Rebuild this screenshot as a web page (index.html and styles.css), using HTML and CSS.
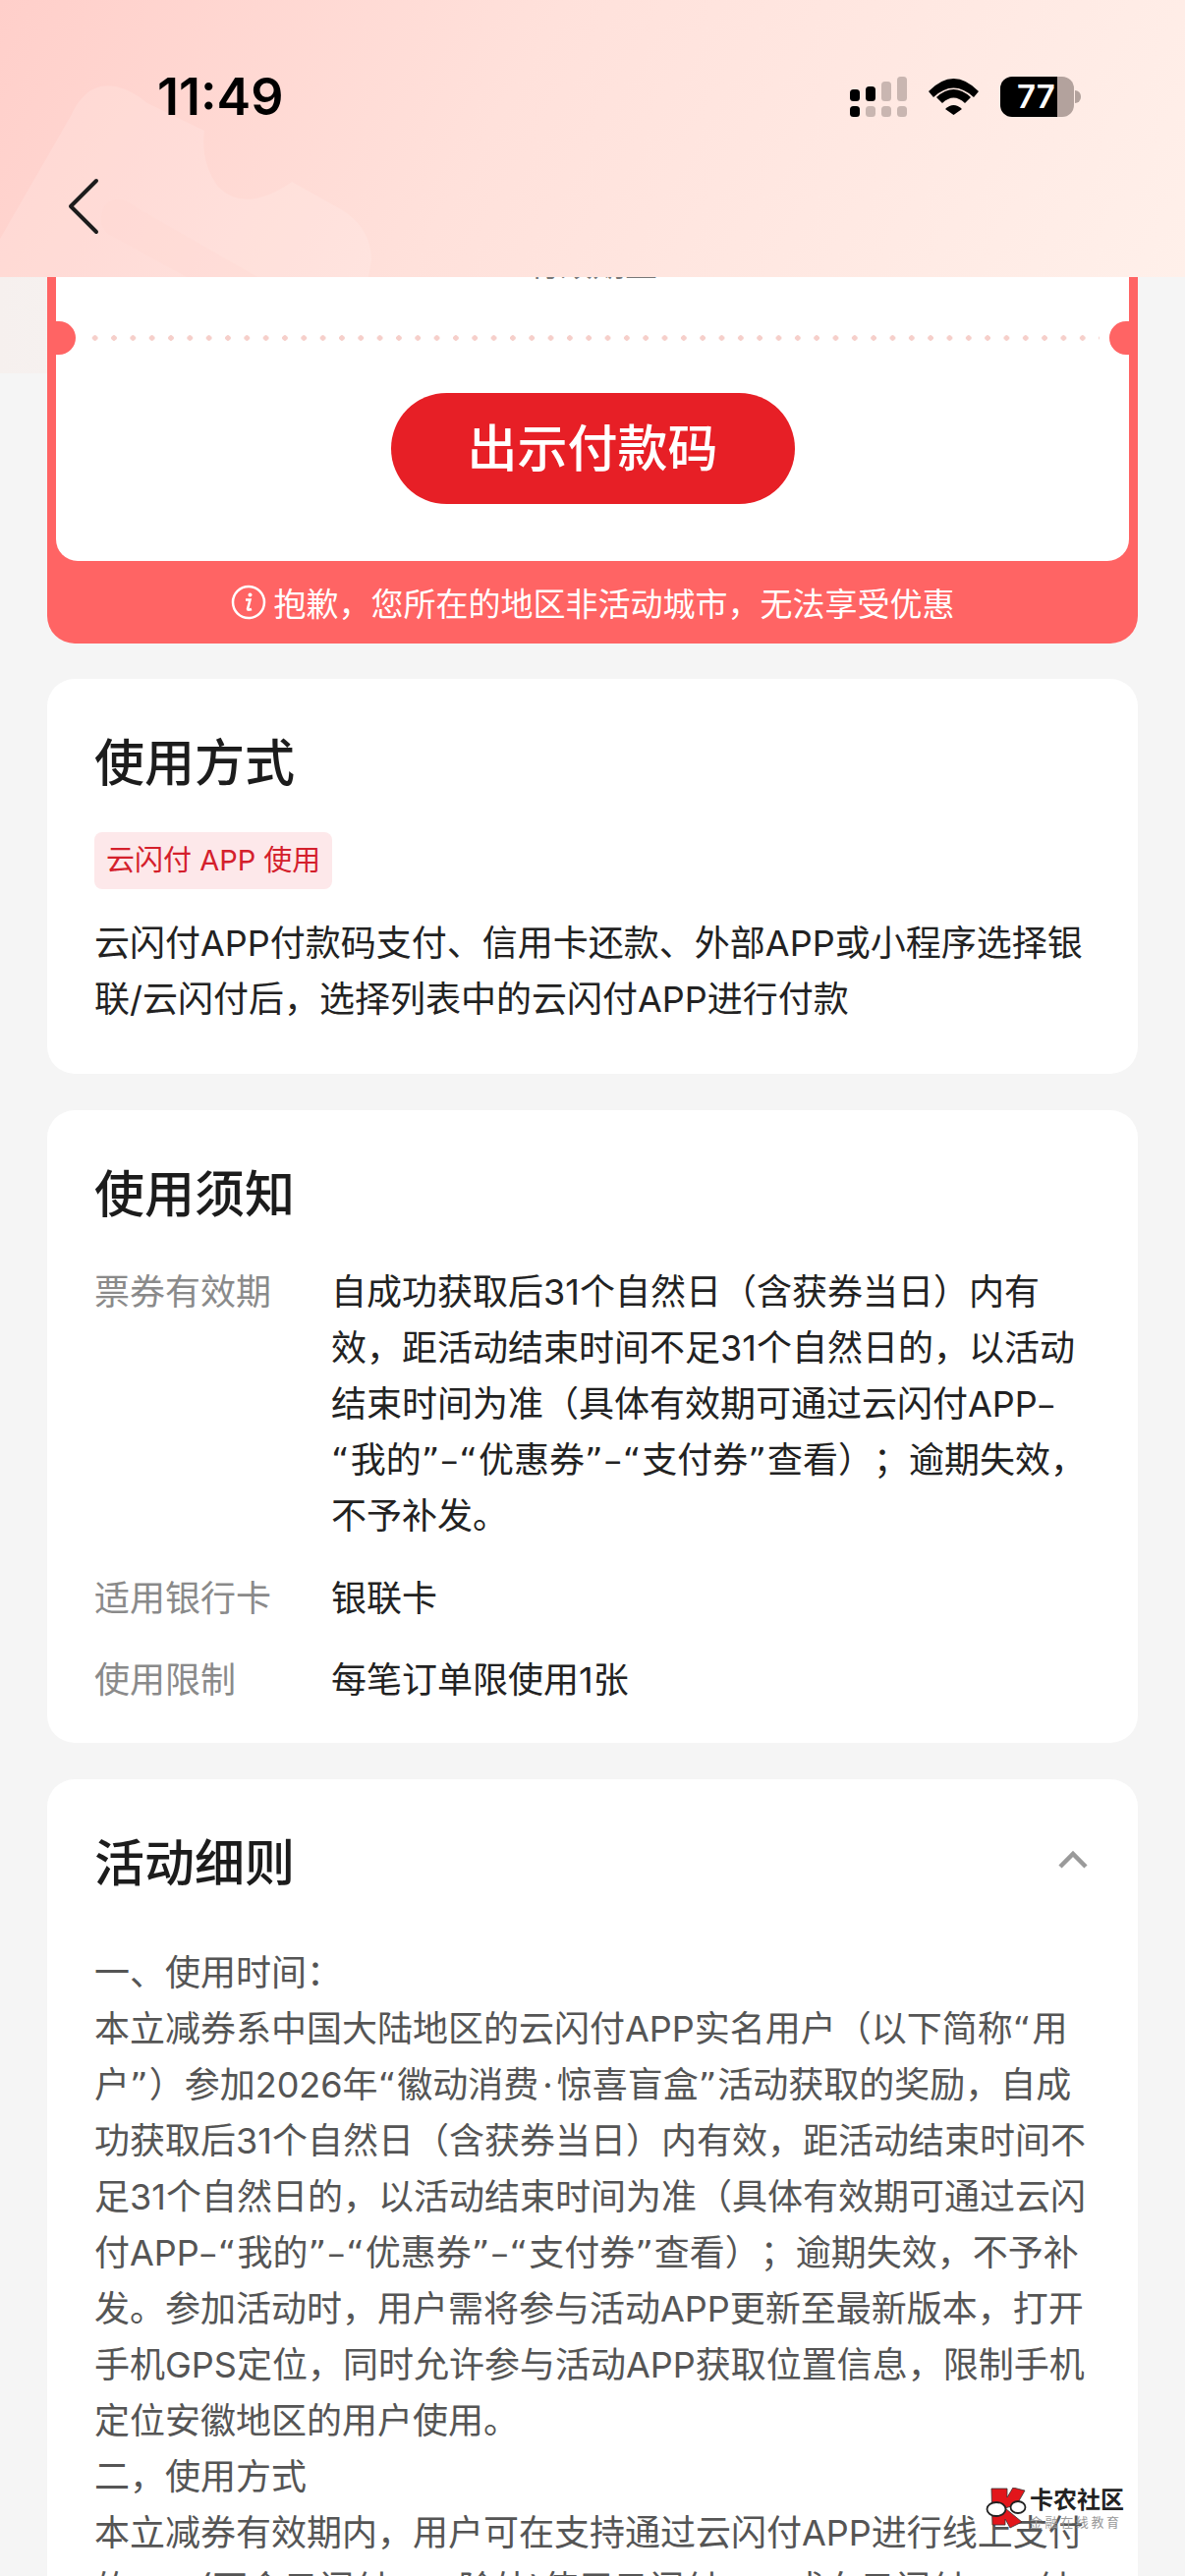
FILE: index.html
```html
<!DOCTYPE html>
<html lang="zh-CN">
<head>
  <meta charset="UTF-8">
  <title>优惠券详情</title>
  <link rel="stylesheet" href="styles.css">
</head>
<body>
  <div id="page">
    <div id="header">
      <svg class="headerArt" width="420" height="282" viewBox="0 0 420 282">
        <path d="M0 243 L72 118 Q88 82 118 88 Q135 92 150 105 L208 133 Q204 165 222 190 Q250 218 297 185 L347 213 Q378 232 378 265 L375 282 H0 Z" fill="#fff" fill-opacity="0.14"/>
        <path d="M103 222 Q105 202 122 203 Q130 204 140 212 L262 282 H190 L110 238 Q103 232 103 222 Z" fill="#ffd6d0" fill-opacity="0.3"/>
      </svg>
      <div class="statusBar">
        <div class="time">11:49</div>
        <div class="statusIcons">
          <svg width="58" height="41" viewBox="0 0 58 41">
            <rect x="0" y="13" width="10" height="12" rx="3.500" fill="#000"/>
            <rect x="16" y="10" width="10" height="15" rx="3.500" fill="#000"/>
            <rect x="32" y="5" width="10" height="20" rx="3.500" fill="#c9b6b1"/>
            <rect x="48" y="0" width="10" height="25" rx="3.500" fill="#c9b6b1"/>
            <rect x="0" y="30" width="10" height="11" rx="3.500" fill="#000"/>
            <rect x="16" y="30" width="10" height="11" rx="3.500" fill="#c9b6b1"/>
            <rect x="32" y="30" width="10" height="11" rx="3.500" fill="#c9b6b1"/>
            <rect x="48" y="30" width="10" height="11" rx="3.500" fill="#c9b6b1"/>
          </svg>
          <svg width="51" height="37" viewBox="0 0 51 37">
            <path d="M0 13 Q25.500 -13 51 13 L46 19 Q25.500 0 5 19 Z" fill="#000"/>
            <path d="M8 19 Q25.500 3 43 19 L37 25 Q25.500 14 14 25 Z" fill="#000"/>
            <path d="M17 31 Q25.500 23 34 31 L25.500 37 Z" fill="#000"/>
          </svg>
          <div class="battery">
            <div class="batteryBody"><span>77</span></div>
            <div class="batteryTip"></div>
          </div>
        </div>
      </div>
      <div class="navBar">
        <svg width="34" height="58" viewBox="0 0 34 58">
          <path d="M30 3 L4 29 L30 55" fill="none" stroke="#1c1c1c" stroke-width="4" stroke-linecap="round" stroke-linejoin="round"/>
        </svg>
      </div>
    </div>

    <div id="main">
      <div class="ticket">
        <div class="ticketInner">
          <div class="cutText">有效期至</div>
          <div class="tear">
            <div class="notch notchLeft"></div>
            <div class="dots"></div>
            <div class="notch notchRight"></div>
          </div>
          <div class="payRow">
            <div class="payButton">出示付款码</div>
          </div>
        </div>
        <div class="notice">
          <svg width="36" height="36" viewBox="0 0 36 36">
            <circle cx="18" cy="18" r="16" fill="none" stroke="#fff" stroke-width="2.500"/>
            <circle cx="19.500" cy="10.500" r="2" fill="#fff"/>
            <path d="M15 15.500 H19.500 L17 25 Q17 26.500 21 25" fill="none" stroke="#fff" stroke-width="2.500"/>
          </svg>
          <span>抱歉，您所在的地区非活动城市，无法享受优惠</span>
        </div>
      </div>

      <div class="card usage">
        <h2>使用方式</h2>
        <div class="tag">云闪付 APP 使用</div>
        <p>云闪付APP付款码支付、信用卡还款、外部APP或小程序选择银联/云闪付后，选择列表中的云闪付APP进行付款</p>
      </div>

      <div class="card notes">
        <h2>使用须知</h2>
        <div class="noteRow">
          <div class="noteLabel">票券有效期</div>
          <div class="noteValue">自成功获取后31个自然日（含获券当日）内有效，距活动结束时间不足31个自然日的，以活动结束时间为准（具体有效期可通过云闪付APP<span class="quo">–“</span>我的<span class="quo">”–“</span>优惠券<span class="quo">”–“</span>支付券<span class="quo">”</span>查看）；逾期失效，不予补发。</div>
        </div>
        <div class="noteRow">
          <div class="noteLabel">适用银行卡</div>
          <div class="noteValue">银联卡</div>
        </div>
        <div class="noteRow">
          <div class="noteLabel">使用限制</div>
          <div class="noteValue">每笔订单限使用1张</div>
        </div>
      </div>

      <div class="card rules">
        <div class="rulesHead">
          <h2>活动细则</h2>
          <svg class="collapseIcon" width="34" height="20" viewBox="0 0 34 20">
            <path d="M4 17 L17 4 L30 17" fill="none" stroke="#9a9a9a" stroke-width="4.500"/>
          </svg>
        </div>
        <div class="rulesText">
          <p>一、使用时间：</p>
          <p>本立减券系中国大陆地区的云闪付APP实名用户（以下简称<span class="quo">“</span>用户<span class="quo">”</span>）参加2026年<span class="quo">“</span>徽动消费<span class="midDot">·</span>惊喜盲盒<span class="quo">”</span>活动获取的奖励，自成功获取后31个自然日（含获券当日）内有效，距活动结束时间不足31个自然日的，以活动结束时间为准（具体有效期可通过云闪付APP<span class="quo">–“</span>我的<span class="quo">”–“</span>优惠券<span class="quo">”–“</span>支付券<span class="quo">”</span>查看）；逾期失效，不予补发。参加活动时，用户需将参与活动APP更新至最新版本，打开手机GPS定位，同时允许参与活动APP获取位置信息，限制手机定位安徽地区的用户使用。</p>
          <p>二，使用方式</p>
          <p>本立减券有效期内，用户可在支持通过云闪付APP进行线上支付的APP(不含云闪付APP除外)使用云闪付APP或向云闪付APP付</p>
        </div>
      </div>
    </div>

    <div class="watermark">
      <svg width="42" height="42" viewBox="0 0 42 42">
        <path d="M6 1 H22 V10 L28 0 L40 3 L32 17 L20 21 L37 35 L25 41 L20 32 V38 H7 Z" fill="#e2161b" stroke="#333" stroke-width="0.800"/>
        <ellipse cx="11" cy="22" rx="9.500" ry="7" fill="#fff" stroke="#222" stroke-width="1.800"/>
        <ellipse cx="33" cy="20" rx="7.500" ry="6" fill="#fff" stroke="#222" stroke-width="1.800"/>
      </svg>
      <div class="watermarkText">
        <div class="wmTitle">卡农社区</div>
        <div class="wmSub">金融在线教育</div>
      </div>
    </div>
  </div>
</body>
</html>
```

FILE: styles.css
```css
* {
  box-sizing: border-box;
}

html,
body {
  margin: 0;
  padding: 0;
}

body {
  background: #f5f5f5;
  font-family: Inter, "Noto Sans CJK SC", sans-serif;
  color: #222;
  text-spacing-trim: space-all;
}

#page {
  position: relative;
  width: 1206px;
  height: 2622px;
  overflow: hidden;
  background: linear-gradient(90deg, #f6f0ee 0, #f5f5f5 300px) no-repeat;
  background-size: 100% 380px;
}

#header {
  position: relative;
  z-index: 2;
  height: 282px;
  background: linear-gradient(120deg, #ffcfca 0%, #ffe1db 42%, #fff0ea 100%);
  overflow: hidden;
}

.headerArt {
  position: absolute;
  left: 0;
  top: 0;
}

.statusBar {
  position: relative;
  display: flex;
  justify-content: space-between;
  align-items: center;
  height: 140px;
  padding: 56px 106px 0 160px;
}

.time {
  font-size: 52px;
  font-weight: 600;
  color: #000;
}

.statusIcons {
  display: flex;
  align-items: center;
  gap: 22px;
}

.battery {
  display: flex;
  align-items: center;
  gap: 1px;
}

.batteryBody {
  width: 75px;
  height: 41px;
  border-radius: 12px;
  background: linear-gradient(90deg, #000 0, #000 77%, #b3a29d 77%, #b3a29d 100%);
  color: #fff;
  font-size: 33px;
  font-weight: 600;
  line-height: 41px;
  padding-left: 17px;
}

.batteryTip {
  width: 6px;
  height: 13px;
  border-radius: 0 6px 6px 0;
  background: #b3a29d;
}

.navBar {
  position: relative;
  padding: 41px 0 0 68px;
}

#main {
  display: flex;
  flex-direction: column;
  gap: 37px;
  padding: 0 48px;
}

.ticket {
  margin-top: -33px;
  margin-bottom: -1px;
  background: #ff6464;
  border-radius: 0 0 28px 28px;
  padding: 0 9px;
}

.ticketInner {
  background: #fff;
  border-radius: 0 0 22px 22px;
  padding-bottom: 58px;
}

.cutText {
  height: 48px;
  line-height: 40px;
  overflow: hidden;
  text-align: center;
  font-size: 33px;
  color: #777;
}

.tear {
  display: flex;
  align-items: center;
  justify-content: space-between;
  height: 34px;
  margin-top: 30px;
}

.notch {
  width: 20px;
  height: 34px;
  background: #ff6464;
}

.notchLeft {
  border-radius: 0 17px 17px 0;
}

.notchRight {
  border-radius: 17px 0 0 17px;
}

.dots {
  flex: 1;
  height: 6px;
  margin: 0 10px;
  background-image: radial-gradient(circle, #f6cfca 2.500px, transparent 3px);
  background-size: 19.330px 6px;
}

.payRow {
  display: flex;
  justify-content: center;
  margin-top: 39px;
}

.payButton {
  width: 411px;
  height: 113px;
  line-height: 113px;
  border-radius: 57px;
  background: #e71f26;
  color: #fff;
  text-align: center;
  font-size: 51px;
  font-weight: 500;
}

.notice {
  display: flex;
  align-items: center;
  justify-content: center;
  gap: 8px;
  height: 84px;
  color: #fff;
  font-size: 33px;
}

.card {
  background: #fff;
  border-radius: 28px;
  padding: 48px;
}

.card h2 {
  margin: 0;
  font-size: 51px;
  font-weight: 500;
  line-height: 76px;
  color: #1c1c1c;
}

.card p {
  margin: 0;
}

.usage {
  height: 402px;
}

.tag {
  display: inline-block;
  margin-top: 32px;
  height: 58px;
  line-height: 58px;
  padding: 0 12px;
  border-radius: 8px;
  background: #fde8ea;
  color: #d4202c;
  font-size: 29px;
}

.usage p {
  margin-top: 27px;
  font-size: 36px;
  line-height: 57px;
  color: #222;
}

.notes {
  height: 644px;
}

.noteRow {
  display: flex;
  margin-top: 26.500px;
  font-size: 36px;
  line-height: 57px;
}

.notes h2 + .noteRow {
  margin-top: 33px;
}

.noteLabel {
  width: 241px;
  flex: none;
  color: #8a8a8a;
}

.noteValue {
  flex: 1;
  margin-right: -4px;
  color: #222;
}

.quo {
  font-family: "DejaVu Sans", sans-serif;
  letter-spacing: 1px;
}

.midDot {
  padding: 0 4px;
}

.rules {
  padding-bottom: 0;
}

.rulesHead {
  display: flex;
  align-items: center;
  justify-content: space-between;
}

.collapseIcon {
  margin: -8px 1px 0 0;
}

.rulesText {
  margin-top: 45px;
  font-size: 36px;
  line-height: 57px;
  color: #555;
}

.watermark {
  position: absolute;
  left: 1003px;
  top: 2532px;
  display: flex;
  align-items: flex-start;
  gap: 3px;
}

.wmTitle {
  font-size: 24px;
  font-weight: 700;
  line-height: 26px;
  color: #222;
}

.wmSub {
  margin-top: 1px;
  font-size: 13px;
  line-height: 16px;
  letter-spacing: 2.600px;
  color: #999;
}
```
